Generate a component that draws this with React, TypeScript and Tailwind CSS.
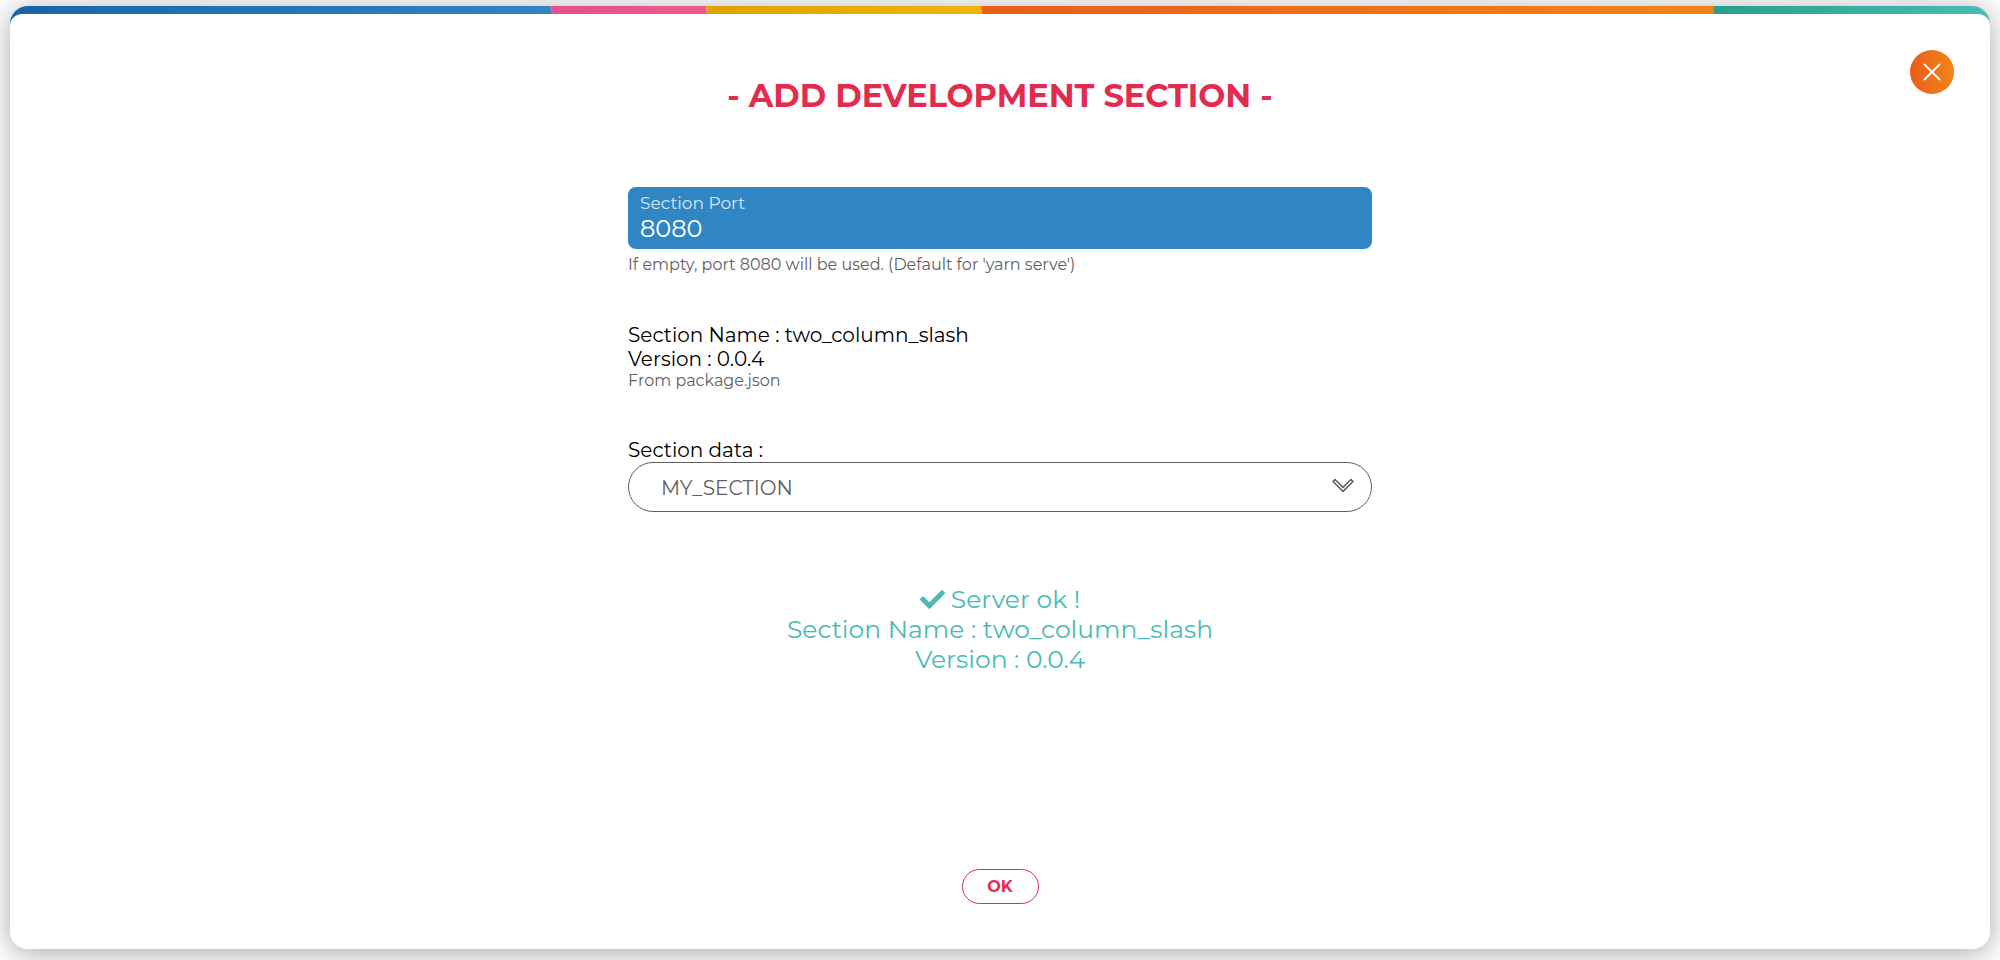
import { useState } from "react";
import { FaCheck } from "react-icons/fa";

const PACKAGE = {
    name: "two_column_slash",
    version: "0.0.4",
};

const SECTIONS = ["MY_SECTION"];

const STRIPES = [
    { id: "blue", from: "#1864ab", to: "#2f86c3", x1: 0, x2: 543, points: "0,0 540,0 546,18 60,18 60,30 0,30" },
    { id: "pink", from: "#e5508b", to: "#ec5b90", x1: 540, x2: 697, points: "540,0 696,0 699,18 546,18" },
    { id: "yellow", from: "#e0a204", to: "#edb608", x1: 696, x2: 971, points: "696,0 971,0 973,18 699,18" },
    { id: "orange", from: "#ea5d1c", to: "#f28419", x1: 971, x2: 1705, points: "971,0 1703,0 1709,18 973,18" },
    { id: "teal", from: "#2b9f8d", to: "#4abbb5", x1: 1703, x2: 1980, points: "1703,0 1980,0 1980,30 1709,30" },
];

function RainbowBar() {
    return (
        <svg
            className="absolute inset-x-0 top-0 h-[30px] w-full"
            viewBox="0 0 1980 30"
            preserveAspectRatio="none"
            aria-hidden="true"
        >
            <defs>
                {STRIPES.map((s) => (
                    <linearGradient key={s.id} id={s.id} gradientUnits="userSpaceOnUse" x1={s.x1} x2={s.x2} y1="0" y2="0">
                        <stop offset="0" stopColor={s.from} />
                        <stop offset="1" stopColor={s.to} />
                    </linearGradient>
                ))}
            </defs>
            {STRIPES.map((s) => (
                <polygon key={s.id} points={s.points} fill={`url(#${s.id})`} />
            ))}
        </svg>
    );
}

export default function App() {
    const [port, setPort] = useState("8080");
    const [section, setSection] = useState(SECTIONS[0]);

    return (
        <main className="flex min-h-screen flex-col bg-white px-2.5 pt-1.5 pb-[11px] font-['Montserrat','Inter',sans-serif] text-black">
            <div className="relative flex flex-1 flex-col rounded-[18px] shadow-[0_4px_30px_rgba(0,0,0,0.35)]">
                <div className="absolute inset-0 overflow-hidden rounded-[18px]">
                    <RainbowBar />
                </div>

                <div className="relative mt-2 flex flex-1 flex-col items-center rounded-t-xl rounded-b-[18px] bg-white px-6 pt-[62px] pb-[45px]">
                    <button
                        type="button"
                        aria-label="Close"
                        className="absolute top-9 right-9 flex size-11 items-center justify-center rounded-full bg-linear-to-r from-[#ea5d1c] to-[#f28419] text-white"
                    >
                        <svg className="size-[18px]" viewBox="0 0 18 18" fill="none" stroke="currentColor" strokeWidth="1.8" strokeLinecap="round">
                            <path d="M1.5 1.5 16.5 16.5M16.5 1.5 1.5 16.5" />
                        </svg>
                    </button>

                    <h1 className="text-center text-[32px] leading-10 font-bold text-[#e32b4f] uppercase">
                        - Add development section -
                    </h1>

                    <form id="add-section" className="mt-[71px] w-full max-w-[744px]" onSubmit={(e) => e.preventDefault()}>
                        <div className="flex h-[62px] flex-col rounded-lg bg-[#2f86c3] px-3 pt-1.5 text-white">
                            <label htmlFor="port" className="text-[17px] leading-5 text-white/80">
                                Section Port
                            </label>
                            <input
                                id="port"
                                type="text"
                                value={port}
                                onChange={(e) => setPort(e.target.value)}
                                className="h-8 w-full bg-transparent text-2xl outline-none"
                            />
                        </div>
                        <p className="mt-1.5 text-base leading-5 text-[#5f5f5f]">
                            If empty, port 8080 will be used. (Default for 'yarn serve')
                        </p>

                        <div className="mt-12 text-xl leading-6">
                            <p>Section Name : {PACKAGE.name}</p>
                            <p>Version : {PACKAGE.version}</p>
                            <p className="text-base leading-5 text-[#5f5f5f]">From package.json</p>
                        </div>

                        <div className="mt-[47px]">
                            <label htmlFor="section" className="block text-xl leading-6">
                                Section data :
                            </label>
                            <div className="relative">
                                <select
                                    id="section"
                                    value={section}
                                    onChange={(e) => setSection(e.target.value)}
                                    className="h-[50px] w-full appearance-none rounded-full border border-[#5f5f5f] bg-white px-8 pt-0.5 text-xl text-[#5f5f5f] outline-none"
                                >
                                    {SECTIONS.map((name) => (
                                        <option key={name}>{name}</option>
                                    ))}
                                </select>
                                <svg
                                    className="pointer-events-none absolute top-4 right-[17px] h-4 w-6"
                                    viewBox="0 0 24 16"
                                    fill="none"
                                    stroke="#5f5f5f"
                                    strokeWidth="1.5"
                                    strokeLinejoin="round"
                                >
                                    <path d="M2 3.5 4 1.5 12 9.4 20 1.5 22 3.5 12 13.4Z" />
                                </svg>
                            </div>
                        </div>
                    </form>

                    <div role="status" className="mt-[72px] text-center text-[25px] leading-[30px] text-[#4abbb5]">
                        <p>
                            <FaCheck className="mr-1.5 inline size-[25px] align-[-4px]" />
                            Server ok !
                        </p>
                        <p>Section Name : {PACKAGE.name}</p>
                        <p>Version : {PACKAGE.version}</p>
                    </div>

                    <button
                        type="submit"
                        form="add-section"
                        className="mt-auto h-[35px] w-[77px] rounded-full border border-[#e32b4f] pt-px text-base font-bold text-[#e32b4f]"
                    >
                        OK
                    </button>
                </div>
            </div>
        </main>
    );
}
